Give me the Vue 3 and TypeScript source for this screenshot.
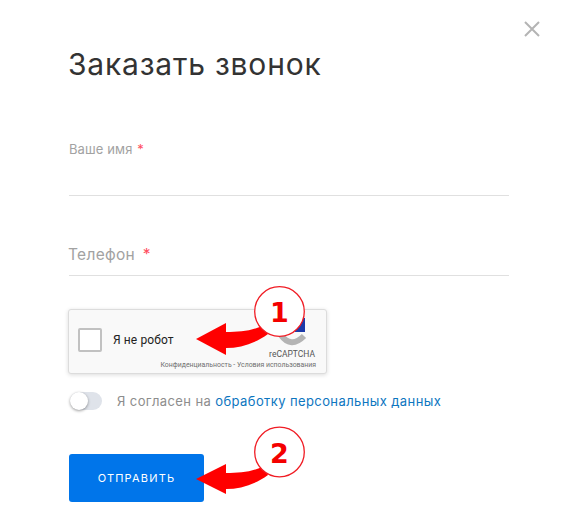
<script setup lang="ts">
const title: string = 'Заказать звонок'
</script>

<template>
  <div class="modal">
    <svg class="close" viewBox="0 0 16 16" width="16" height="16" aria-hidden="true">
      <path d="M1 1 15 15M15 1 1 15" stroke="#b4b4b4" stroke-width="2" fill="none" />
    </svg>
    <h1 class="title">{{ title }}</h1>

    <div class="field field-name">
      <label class="label-small">Ваше имя <span class="req req-small">*</span></label>
    </div>
    <div class="field field-phone">
      <label class="label-large">Телефон <span class="req">*</span></label>
    </div>

    <div class="captcha">
      <div class="check"></div>
      <span class="robot">Я не робот</span>
      <div class="brand">
        <svg class="logo" viewBox="0 0 32 32" width="32" height="32" aria-hidden="true">
          <path d="M18 2 29 2 29 16 19 16Z" fill="#1c3aa9" />
          <path d="M5 19Q15 33 28 20" stroke="#b4b4b4" stroke-width="6" fill="none" />
        </svg>
        <span class="brand-name">reCAPTCHA</span>
      </div>
      <span class="terms">Конфиденциальность - Условия использования</span>
    </div>

    <div class="agree">
      <span class="toggle"><span class="knob"></span></span>
      <span class="agree-text">Я согласен на <a class="link">обработку персональных данных</a></span>
    </div>

    <button class="submit" type="button">ОТПРАВИТЬ</button>

    <svg class="notes" viewBox="0 0 580 522" width="580" height="522" aria-hidden="true">
      <g>
        <path d="M196 339 226 323 226 332C240 332 252 331 264 325L268 334C254 344 240 348 226 348L226 355Z" fill="#ff0000" />
        <circle cx="279.500" cy="311.500" r="24.800" fill="#fff" stroke="#f01c24" stroke-width="1.300" />
      </g>
      <g>
        <path d="M196 479 226 464 226 473C240 473 252 472 264 466L268 475C254 485 240 489 226 489L226 494Z" fill="#ff0000" />
        <circle cx="279.500" cy="452" r="24.800" fill="#fff" stroke="#f01c24" stroke-width="1.300" />
      </g>
      <text x="279.500" y="322" class="num">1</text>
      <text x="279.500" y="462.500" class="num">2</text>
    </svg>
  </div>
</template>

<style>
html, body { margin: 0; background: #fff; }
</style>

<style scoped>
.modal {
  position: relative;
  width: 580px;
  height: 522px;
  box-sizing: border-box;
  padding: 44px 71px 0 69px;
  overflow: hidden;
  background: #fff;
  font-family: Inter, "Noto Sans", sans-serif;
}
.close { position: absolute; left: 524px; top: 21px; }
.title {
  margin: 0 0 0 -1px;
  height: 40px;
  font-size: 30px;
  line-height: 40px;
  letter-spacing: 0.800px;
  font-weight: 400;
  color: #333;
}
.field { border-bottom: 1px solid #e0e0e0; box-sizing: border-box; height: 61px; }
.field-name { margin-top: 51px; padding-top: 6px; }
.field-phone { margin-top: 19px; display: flex; align-items: flex-end; }
.label-small { display: block; font-size: 13px; line-height: 16px; letter-spacing: 0.100px; color: #a2a2a2; }
.label-large { display: block; margin-bottom: 10px; margin-left: -1px; font-size: 15.500px; line-height: 20px; letter-spacing: 0.300px; color: #a2a2a2; }
.req { color: #ff4d5e; margin-left: 3px; }
.req-small { margin-left: 1px; }
.captcha {
  position: relative;
  margin: 33px 0 0 -1px;
  width: 259px;
  height: 65px;
  box-sizing: border-box;
  background: #f9f9f9;
  border: 1px solid #dcdcdc;
  border-radius: 3px;
  box-shadow: 0 1px 4px rgba(0, 0, 0, 0.14);
  display: flex;
  align-items: center;
  font-family: Roboto, sans-serif;
}
.check {
  width: 24px;
  height: 24px;
  box-sizing: border-box;
  margin: -3px 0 0 9px;
  background: #fff;
  border: 2px solid #c1c1c1;
  border-radius: 2px;
}
.robot { margin: -3px 0 0 11px; font-size: 12px; letter-spacing: 0.100px; color: #222; }
.brand {
  position: absolute;
  right: 11px;
  top: 4px;
  display: flex;
  flex-direction: column;
  align-items: center;
}
.logo { margin-top: 2px; }
.brand-name { font-size: 8.500px; line-height: 11px; color: #555; margin-top: 1px; }
.terms {
  position: absolute;
  right: 10px;
  bottom: 3px;
  font-size: 6.900px;
  line-height: 9px;
  color: #6f6f6f;
  white-space: nowrap;
}
.agree { display: flex; align-items: center; margin-top: 17px; height: 20px; }
.toggle {
  display: block;
  position: relative;
  width: 32px;
  height: 18px;
  margin-left: 1px;
  border-radius: 9px;
  background: #dfe3ea;
}
.knob {
  position: absolute;
  left: 0;
  top: 0;
  width: 18px;
  height: 18px;
  border-radius: 50%;
  background: #fff;
  box-shadow: 0 1px 3px rgba(0, 0, 0, 0.4);
}
.agree-text { margin-left: 15px; font-size: 13px; letter-spacing: 0.400px; color: #8d8d8d; white-space: nowrap; }
.link { color: #0d76bf; }
.submit {
  display: block;
  margin-top: 43px;
  width: 135px;
  height: 48px;
  padding: 0;
  border: 0;
  border-radius: 3px;
  background: #0075ea;
  color: #fff;
  font-family: inherit;
  font-size: 11px;
  letter-spacing: 1.200px;
}
.notes { position: absolute; left: 0; top: 0; pointer-events: none; }
.num {
  font-family: "DejaVu Sans", sans-serif;
  font-size: 27px;
  font-weight: 700;
  fill: #f40000;
  text-anchor: middle;
}
</style>
